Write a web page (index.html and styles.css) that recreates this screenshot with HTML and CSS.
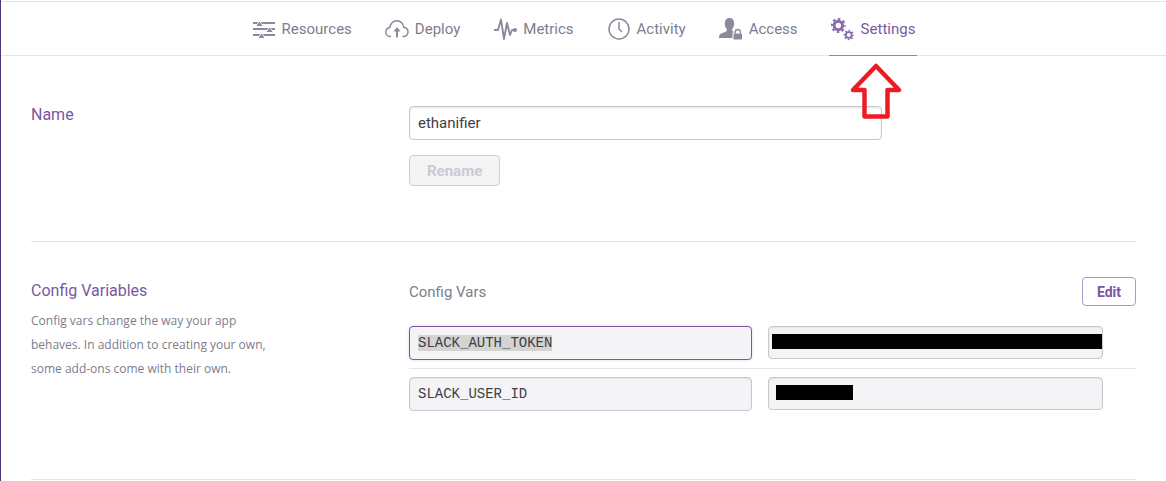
FILE: index.html
```html
<!DOCTYPE html>
<html lang="en">
<head>
<meta charset="utf-8">
<meta name="viewport" content="width=device-width, initial-scale=1">
<title>Settings</title>
<link rel="stylesheet" href="styles.css">
</head>
<body>
<nav class="tabs" aria-label="App sections">
  <a class="tab" href="#resources">
    <svg class="icon" viewBox="0 0 24 24" aria-hidden="true"><path d="M1 6h22M1 12h22M1 18h22" fill="none" stroke="currentColor" stroke-width="2"/><path d="M4.500 9L7.500 4.500 10.500 9zM14.500 15l3-4.500 3 4.500zM6.500 21l3-4.500 3 4.500z" fill="currentColor" stroke="#fff" stroke-width="1.500" paint-order="stroke"/></svg>
    <span>Resources</span>
  </a>
  <a class="tab" href="#deploy">
    <svg class="icon" viewBox="0 0 24 24" aria-hidden="true"><path d="M6 19.500H5A4.500 4.500 0 0 1 .8 15C.8 12.500 2.500 10.700 4.900 10.400C5.100 6.600 8.100 3.800 11.800 3.800C15.400 3.800 18.400 6.500 18.700 10.200C21.200 10.500 23 12.500 23 15A4.500 4.500 0 0 1 18.500 19.500H17.500" fill="none" stroke="currentColor" stroke-width="1.500"/><path d="M12 20.500v-8" stroke="currentColor" stroke-width="2"/><path d="M8.500 14.500L12 10l3.500 4.500z" fill="currentColor"/></svg>
    <span>Deploy</span>
  </a>
  <a class="tab" href="#metrics">
    <svg class="icon" viewBox="0 0 24 24" aria-hidden="true"><path d="M1 13h4L8 2.500 11 22 14 6l3 12 2-5H22" fill="none" stroke="currentColor" stroke-width="1.900" stroke-linejoin="round"/><circle cx="22" cy="13" r="2" fill="currentColor"/></svg>
    <span>Metrics</span>
  </a>
  <a class="tab" href="#activity">
    <svg class="icon" viewBox="0 0 24 24" aria-hidden="true"><circle cx="12" cy="12" r="10" fill="none" stroke="currentColor" stroke-width="1.500"/><path d="M12 5v7l3 3" fill="none" stroke="currentColor" stroke-width="1.500"/></svg>
    <span>Activity</span>
  </a>
  <a class="tab" href="#access">
    <svg class="icon" viewBox="0 0 24 24" aria-hidden="true"><path d="M10.500 1C13.500 1 15.200 3 15.200 6.500C15.200 9.500 13.800 11 13.300 12C12.700 13.500 13.500 14.500 15.200 15V21H0C0 17 2 16.500 5.500 15.300C8 14.500 8.300 13.300 7.500 11.800C6.500 10.500 5.800 9 5.800 6.500C5.800 3 7.500 1 10.500 1z" fill="currentColor"/><path d="M14.500 16.500h8.500v6h-8.500z" fill="currentColor" stroke="#fff" stroke-width="2" paint-order="stroke"/><path d="M16.300 16.500v-1.500a2.500 2.500 0 0 1 5 0v1.500" fill="none" stroke="currentColor" stroke-width="1.300"/></svg>
    <span>Access</span>
  </a>
  <a class="tab tab-current" href="#settings" aria-current="page">
    <svg class="icon" viewBox="0 0 24 24" aria-hidden="true"><g fill="none" stroke="currentColor"><circle cx="7.300" cy="8.500" r="4.200" stroke-width="3"/><circle cx="7.300" cy="8.500" r="6.500" stroke-width="2" stroke-dasharray="2.600 2.505" stroke-dashoffset="1.300"/><circle cx="17.800" cy="18" r="2.900" stroke-width="1.900"/><circle cx="17.800" cy="18" r="4.400" stroke-width="1.500" stroke-dasharray="1.700 1.756" stroke-dashoffset=".85"/></g></svg>
    <span>Settings</span>
    <svg class="pointer" viewBox="0 0 52 56" aria-hidden="true"><path d="M26 3L49 27H37.500V53.500H14.500V27H3z" fill="none" stroke="#ed1c24" stroke-width="4.500" stroke-linejoin="round"/></svg>
  </a>
</nav>
<main class="content">
  <section class="section section-name">
    <h2 class="title"><label for="app-name">Name</label></h2>
    <form class="name-form">
      <input class="field name-field" id="app-name" type="text" value="ethanifier">
      <button class="button" type="button" disabled>Rename</button>
    </form>
  </section>
  <section class="section section-config">
    <div class="intro">
      <h2 class="title">Config Variables</h2>
      <p class="description">Config vars change the way your app behaves. In addition to creating your own, some add-ons come with their own.</p>
    </div>
    <div>
      <header class="vars-header">
        <h3 class="subtitle">Config Vars</h3>
        <button class="button button-edit" type="button">Edit</button>
      </header>
      <div class="row">
        <input class="field key key-active" type="text" value="SLACK_AUTH_TOKEN" aria-label="First config key" readonly>
        <div class="value">
          <input class="field value-field" type="text" aria-label="First config value" readonly>
          <span class="redaction redaction-long"></span>
        </div>
      </div>
      <div class="row">
        <input class="field key" type="text" value="SLACK_USER_ID" aria-label="Second config key" readonly>
        <div class="value">
          <input class="field value-field" type="text" aria-label="Second config value" readonly>
          <span class="redaction redaction-short"></span>
        </div>
      </div>
    </div>
  </section>
</main>
</body>
</html>
```

FILE: styles.css
```css
* { box-sizing: border-box; }
body {
  margin: 0;
  min-height: 100vh;
  border-left: 1px solid #4f3674;
  background: #fff;
  color: #7d7d8c;
  font-family: Roboto, "Liberation Sans", sans-serif;
  font-size: 15px;
}
h2, h3, p { margin: 0; font-weight: 400; }
.tabs {
  display: flex;
  justify-content: center;
  gap: 29px;
  height: 55px;
  margin-top: 1px;
  border-top: 1px solid #e4e4e7;
  border-bottom: 1px solid #e4e4e7;
}
.tab {
  position: relative;
  display: flex;
  align-items: center;
  gap: 6px;
  height: 54px;
  padding: 0 2px;
  border-bottom: 1px solid transparent;
  color: #7d7d8c;
  text-decoration: none;
}
.tab-current { border-color: #9b7fbd; color: #79589f; }
.icon { width: 24px; height: 24px; color: #8a8a9c; }
.tab-current .icon { color: #8b6bb0; }
.pointer {
  position: absolute;
  z-index: 1;
  top: 61px;
  left: 21px;
  width: 52px;
  height: 56px;
}
.content { padding: 0 30px; }
.section {
  display: grid;
  grid-template-columns: 378px 1fr;
  border-bottom: 1px solid #e4e4e7;
}
.section-name { padding: 50px 0 55px; }
.section-config { padding: 35px 0 68px; }
.title { color: #79589f; font-size: 16px; line-height: 18px; }
.section-config .title { padding-top: 5px; }
.intro { max-width: 240px; }
.description {
  margin-top: 9px;
  font-family: "Open Sans", "Liberation Sans", sans-serif;
  font-size: 12px;
  line-height: 24px;
}
.name-form {
  display: flex;
  flex-direction: column;
  align-items: flex-start;
  gap: 15px;
}
.field {
  display: block;
  width: 100%;
  height: 34px;
  padding: 6px 8px;
  border: 1px solid #c8c7d0;
  border-radius: 4px;
  outline: 0;
  background-color: #f4f4f6;
  box-shadow: inset 0 1px 2px #e4e3e9;
  color: #3f3f44;
  font: 14px/20px "Liberation Mono", monospace;
}
.name-field {
  width: 65%;
  background-color: #fff;
  font: 15px/20px Roboto, "Liberation Sans", sans-serif;
}
.button {
  height: 31px;
  padding: 0 17px;
  border: 1px solid #cfced6;
  border-radius: 4px;
  background: #f4f4f5;
  color: #cbcad3;
  font: 700 15px/16px Roboto, "Liberation Sans", sans-serif;
}
.button-edit {
  height: 29px;
  padding: 0 14px;
  border-color: #ad97c8;
  background: #fff;
  color: #79589f;
  font-size: 14px;
}
.vars-header {
  display: flex;
  align-items: center;
  justify-content: space-between;
  margin-bottom: 20px;
}
.subtitle { font-size: 15px; }
.row {
  display: grid;
  grid-template-columns: 343fr 335fr;
  gap: 16px;
  padding-right: 33px;
}
.row + .row {
  margin-top: 8px;
  padding-top: 8px;
  border-top: 1px solid #e4e4e7;
}
.key-active {
  border-color: #79589f;
  background-image: linear-gradient(#d3d3d3, #d3d3d3);
  background-origin: content-box;
  background-position: left center;
  background-repeat: no-repeat;
  background-size: 16ch 16px;
  box-shadow: 0 0 3px #ddd2e9;
}
.value { position: relative; }
.value-field { height: 33px; }
.redaction {
  position: absolute;
  top: 8px;
  height: 15px;
  background: #000;
}
.redaction-long { left: 4px; right: 1px; }
.redaction-short { left: 8px; width: 77px; }
```
